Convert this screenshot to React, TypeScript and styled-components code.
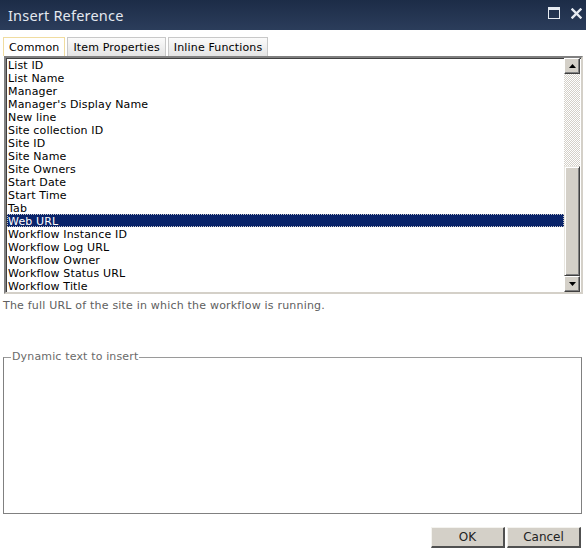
import { useState } from 'react';
import styled, { createGlobalStyle } from 'styled-components';

const GlobalStyle = createGlobalStyle`
  html, body {
    margin: 0;
    padding: 0;
    background: #ffffff;
  }
  body {
    font-family: Verdana, "DejaVu Sans", sans-serif;
    font-size: 11px;
  }
`;

const Dialog = styled.div`
  width: 586px;
  height: 556px;
  display: flex;
  flex-direction: column;
  background: #ffffff;
  overflow: hidden;
`;

const TitleBar = styled.div`
  height: 30px;
  flex: 0 0 30px;
  display: flex;
  align-items: center;
  justify-content: space-between;
  padding: 0 4px 0 8px;
  box-sizing: border-box;
  background: linear-gradient(#1c2c47, #2b3d5b);
`;

const Title = styled.div`
  font-family: "Noto Sans", "Open Sans", sans-serif;
  font-size: 14.5px;
  color: #e3e8ef;
  letter-spacing: 0.2px;
  padding-bottom: 1px;
`;

const TitleButtons = styled.div`
  display: flex;
  gap: 11px;
  align-items: center;
  padding-bottom: 4px;
`;

const Body = styled.div`
  flex: 1;
  display: flex;
  flex-direction: column;
  padding: 7px 3px 0 3px;
`;

const TabStrip = styled.div`
  display: flex;
  gap: 2px;
  height: 19px;
`;

const Tab = styled.button<{ $active?: boolean }>`
  font: 11px Verdana, "DejaVu Sans", sans-serif;
  letter-spacing: 0.15px;
  color: #000;
  height: 19px;
  padding: 1px 5px 0;
  margin: 0;
  border: 1px solid ${(p) => (p.$active ? '#f0dca0' : '#c8c8c8')};
  border-bottom: 0;
  background: ${(p) => (p.$active ? '#ffffff' : 'linear-gradient(#fbfbfb, #e4e4e4)')};
  cursor: pointer;
`;

const ListBox = styled.div`
  margin: 0 0 0 1px;
  width: 579px;
  height: 238px;
  box-sizing: border-box;
  border-top: 2px solid #808080;
  border-left: 2px solid #808080;
  border-right: 2px solid #d4d0c8;
  border-bottom: 2px solid #d4d0c8;
  box-shadow: inset 1px 1px 0 #404040;
  display: flex;
  background: #fff;
`;

const Items = styled.ul`
  list-style: none;
  margin: 0;
  padding: 0 0 0 1px;
  flex: 1;
  overflow: hidden;
`;

const Item = styled.li<{ $selected?: boolean }>`
  height: 13px;
  box-sizing: border-box;
  padding: 2px 0 0 1px;
  line-height: 11px;
  letter-spacing: 0.15px;
  white-space: nowrap;
  color: ${(p) => (p.$selected ? '#ffffff' : '#000000')};
  background: ${(p) => (p.$selected ? '#0a246a' : 'transparent')};
  outline: ${(p) => (p.$selected ? '1px dotted #c7c7c7' : 'none')};
  outline-offset: -1px;
  cursor: default;
`;

const ScrollBar = styled.div`
  width: 16px;
  display: flex;
  flex-direction: column;
  margin: 0 1px 0 0;
`;

const ArrowButton = styled.div`
  width: 16px;
  height: 16px;
  flex: 0 0 16px;
  box-sizing: border-box;
  background: #d4d0c8;
  border-top: 1px solid #ffffff;
  border-left: 1px solid #ffffff;
  border-right: 1px solid #404040;
  border-bottom: 1px solid #404040;
  box-shadow: inset -1px -1px 0 #808080;
  display: flex;
  align-items: center;
  justify-content: center;
`;

const Track = styled.div<{ $size: number }>`
  flex: 0 0 ${(p) => p.$size}px;
  background-color: #f4f3ef;
  background-image: repeating-conic-gradient(#d4d0c8 0 25%, #ffffff 0 50%);
  background-size: 2px 2px;
`;

const Thumb = styled.div<{ $size: number }>`
  flex: 0 0 ${(p) => p.$size}px;
  box-sizing: border-box;
  background: #d4d0c8;
  border-top: 1px solid #e8e6e0;
  border-left: 1px solid #e8e6e0;
  border-right: 1px solid #404040;
  border-bottom: 1px solid #404040;
  box-shadow: inset 1px 1px 0 #ffffff, inset -1px -1px 0 #808080;
`;

const Description = styled.div`
  color: #606060;
  letter-spacing: 0.2px;
  margin: 5px 0 0 0;
  height: 13px;
  line-height: 13px;
`;

const Field = styled.fieldset`
  margin: 39px 1px 0 0;
  padding: 0;
  height: 163px;
  box-sizing: border-box;
  border: 1px solid #808080;
  border-top-color: #9a9a9a;
`;

const Legend = styled.legend`
  color: #6a6a6a;
  letter-spacing: 0.15px;
  padding: 0 1px;
  margin-left: 7px;
  line-height: 12px;
`;

const Footer = styled.div`
  display: flex;
  justify-content: flex-end;
  gap: 2px;
  margin-top: 13px;
  padding-right: 2px;
`;

const Button = styled.button`
  font: 12px Verdana, "DejaVu Sans", sans-serif;
  color: #222;
  width: 74px;
  height: 21px;
  margin: 0;
  padding: 0;
  background: #d4d0c8;
  border-top: 1px solid #f4f3ef;
  border-left: 1px solid #f4f3ef;
  border-right: 2px solid #505050;
  border-bottom: 2px solid #505050;
  cursor: pointer;
`;

const fields = [
  'List ID',
  'List Name',
  'Manager',
  "Manager's Display Name",
  'New line',
  'Site collection ID',
  'Site ID',
  'Site Name',
  'Site Owners',
  'Start Date',
  'Start Time',
  'Tab',
  'Web URL',
  'Workflow Instance ID',
  'Workflow Log URL',
  'Workflow Owner',
  'Workflow Status URL',
  'Workflow Title',
];

const tabs = ['Common', 'Item Properties', 'Inline Functions'];

function MaximizeIcon() {
  return (
    <svg width="12" height="12" viewBox="0 0 12 12">
      <rect x="0.5" y="0.5" width="11" height="11" fill="none" stroke="#e6ebf2" strokeWidth="1" />
      <rect x="0" y="0" width="12" height="3" fill="#e6ebf2" />
    </svg>
  );
}

function CloseIcon() {
  return (
    <svg width="11" height="11" viewBox="0 0 11 11">
      <path d="M1.5 1.5 L9.5 9.5 M9.5 1.5 L1.5 9.5" stroke="#e6ebf2" strokeWidth="2.4" strokeLinecap="square" />
    </svg>
  );
}

function Arrow({ down }: { down?: boolean }) {
  return (
    <svg width="7" height="4" viewBox="0 0 7 4">
      <path d={down ? 'M0 0 H7 L3.5 4 Z' : 'M3.5 0 L7 4 H0 Z'} fill="#000" />
    </svg>
  );
}

function App() {
  const [activeTab, setActiveTab] = useState(0);
  const [selected, setSelected] = useState('Web URL');

  return (
    <>
      <GlobalStyle />
      <Dialog>
        <TitleBar>
          <Title>{'Insert Reference'}</Title>
          <TitleButtons>
            <MaximizeIcon />
            <CloseIcon />
          </TitleButtons>
        </TitleBar>
        <Body>
          <TabStrip>
            {tabs.map((t, i) => (
              <Tab key={t} $active={i === activeTab} onClick={() => setActiveTab(i)}>
                {t}
              </Tab>
            ))}
          </TabStrip>
          <ListBox>
            <Items>
              {fields.map((f) => (
                <Item key={f} $selected={f === selected} onClick={() => setSelected(f)}>
                  {f}
                </Item>
              ))}
            </Items>
            <ScrollBar>
              <ArrowButton>
                <Arrow />
              </ArrowButton>
              <Track $size={92} />
              <Thumb $size={110} />
              <ArrowButton>
                <Arrow down />
              </ArrowButton>
            </ScrollBar>
          </ListBox>
          <Description>{'The full URL of the site in which the workflow is running.'}</Description>
          <Field>
            <Legend>{'Dynamic text to insert'}</Legend>
          </Field>
          <Footer>
            <Button>{'OK'}</Button>
            <Button>{'Cancel'}</Button>
          </Footer>
        </Body>
      </Dialog>
    </>
  );
}

export default App;
